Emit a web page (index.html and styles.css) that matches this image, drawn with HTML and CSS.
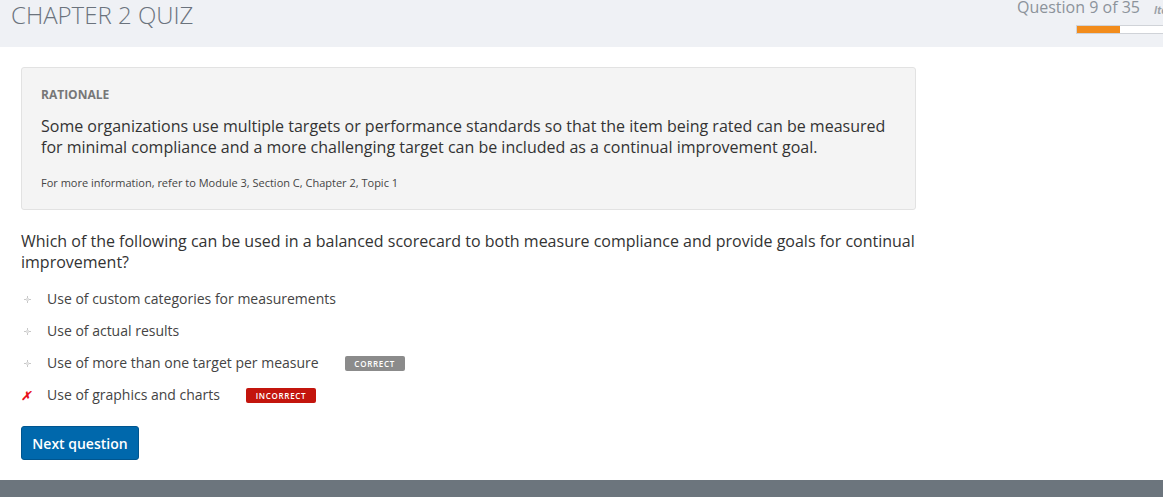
FILE: index.html
```html
<!DOCTYPE html>
<html>
<head>
<meta charset="utf-8">
<link rel="stylesheet" href="styles.css">
</head>
<body>
<header class="topbar">
  <h1 class="title">CHAPTER 2 QUIZ</h1>
  <div class="progress-area">
    <div class="progress-text"><span class="qcount">Question 9 of 35</span><span class="item">Item</span></div>
    <div class="progress"><div class="progress-fill" style="width:43px"></div></div>
  </div>
</header>
<main class="content">
  <section class="rationale">
    <div class="rationale-label">RATIONALE</div>
    <p class="rationale-text">Some organizations use multiple targets or performance standards so that the item being rated can be measured for minimal compliance and a more challenging target can be included as a continual improvement goal.</p>
    <p class="rationale-ref">For more information, refer to Module 3, Section C, Chapter 2, Topic 1</p>
  </section>
  <p class="question">Which of the following can be used in a balanced scorecard to both measure compliance and provide goals for continual improvement?</p>
  <ul class="options">
    <li class="option"><span class="marker"><svg width="7" height="7" viewBox="0 0 7 7"><rect x="3" y="0" width="1" height="2" fill="#c8c8c8"/><rect x="0" y="3" width="2" height="1" fill="#c8c8c8"/><rect x="5" y="3" width="2" height="1" fill="#c8c8c8"/><rect x="3" y="5" width="1" height="2" fill="#c8c8c8"/><rect x="2" y="2" width="3" height="3" fill="#e2e2e2"/></svg></span><span class="opt-text">Use of custom categories for measurements</span></li>
    <li class="option"><span class="marker"><svg width="7" height="7" viewBox="0 0 7 7"><rect x="3" y="0" width="1" height="2" fill="#c8c8c8"/><rect x="0" y="3" width="2" height="1" fill="#c8c8c8"/><rect x="5" y="3" width="2" height="1" fill="#c8c8c8"/><rect x="3" y="5" width="1" height="2" fill="#c8c8c8"/><rect x="2" y="2" width="3" height="3" fill="#e2e2e2"/></svg></span><span class="opt-text">Use of actual results</span></li>
    <li class="option"><span class="marker"><svg width="7" height="7" viewBox="0 0 7 7"><rect x="3" y="0" width="1" height="2" fill="#c8c8c8"/><rect x="0" y="3" width="2" height="1" fill="#c8c8c8"/><rect x="5" y="3" width="2" height="1" fill="#c8c8c8"/><rect x="3" y="5" width="1" height="2" fill="#c8c8c8"/><rect x="2" y="2" width="3" height="3" fill="#e2e2e2"/></svg></span><span class="opt-text">Use of more than one target per measure</span><span class="badge badge-correct">CORRECT</span></li>
    <li class="option"><span class="marker marker-x">✗</span><span class="opt-text">Use of graphics and charts</span><span class="badge badge-incorrect">INCORRECT</span></li>
  </ul>
  <button class="next-btn">Next question</button>
</main>
<footer class="footer"></footer>
</body>
</html>
```
FILE: styles.css
```css
html, body {
  margin: 0;
  padding: 0;
}
body {
  font-family: "Open Sans", "Liberation Sans", sans-serif;
  background: #fff;
  width: 1163px;
  height: 497px;
  overflow: hidden;
  display: flex;
  flex-direction: column;
}
.topbar {
  height: 47px;
  background: #eff1f5;
  display: flex;
  justify-content: space-between;
  flex-shrink: 0;
  overflow: hidden;
}
.title {
  margin: 0;
  padding-left: 11px;
  padding-top: 1px;
  font-weight: 300;
  font-size: 24px;
  line-height: 28px;
  color: #6b737d;
  letter-spacing: 0;
}
.progress-area {
  display: flex;
  flex-direction: column;
  align-items: flex-start;
  width: 146px;
  flex-shrink: 0;
}
.progress-text {
  display: flex;
  align-items: baseline;
  white-space: nowrap;
  height: 17px;
  line-height: 16px;
}
.qcount {
  font-size: 16px;
  color: #8c939b;
  font-weight: 400;
  position: relative;
  top: -1px;
}
.item {
  font-size: 10px;
  font-style: italic;
  font-weight: 700;
  color: #9aa0a7;
  margin-left: 14px;
}
.progress {
  margin-top: 8px;
  margin-left: 59px;
  width: 100px;
  height: 7px;
  background: #fff;
  border: 1px solid #d0d3d8;
  border-right: none;
  display: flex;
}
.progress-fill {
  background: #f28c1c;
  height: 100%;
}
.content {
  flex: 1;
  padding: 20px 21px 0 21px;
  display: flex;
  flex-direction: column;
  align-items: flex-start;
}
.rationale {
  width: 854px;
  background: #f4f4f4;
  border: 1px solid #e2e2e2;
  border-radius: 3px;
  padding: 19px 20px 19px 19px;
}
.rationale-label {
  font-size: 12px;
  font-weight: 700;
  color: #777;
  line-height: 16px;
}
.rationale-text {
  margin: 13px 0 0 0;
  font-size: 16px;
  line-height: 21px;
  color: #333;
}
.rationale-ref {
  margin: 17px 0 0 0;
  font-size: 11px;
  line-height: 15px;
  color: #444;
}
.question {
  margin: 21px 0 0 0;
  width: 900px;
  font-size: 16px;
  line-height: 21px;
  color: #333;
}
.options {
  list-style: none;
  margin: 16px 0 0 0;
  padding: 0;
  display: flex;
  flex-direction: column;
  gap: 12px;
}
.option {
  display: flex;
  align-items: center;
  height: 20px;
  font-size: 14px;
  color: #444;
}
.marker {
  width: 26px;
  display: flex;
  align-items: center;
  padding-left: 3px;
  box-sizing: border-box;
}
.marker svg {
  display: block;
}
.marker-x {
  color: #e8101a;
  font-size: 12px;
  font-style: italic;
  font-weight: 700;
  padding-left: 0;
}
.opt-text {
  line-height: 20px;
}
.badge {
  display: inline-block;
  font-size: 8px;
  font-weight: 600;
  letter-spacing: 0.7px;
  color: #fff;
  line-height: 15px;
  height: 15px;
  border-radius: 2px;
  text-align: center;
}
.badge-correct {
  background: #8b8b8b;
  width: 60px;
  margin-left: 26px;
}
.badge-incorrect {
  background: #c3150d;
  width: 70px;
  margin-left: 26px;
}
.next-btn {
  margin-top: 21px;
  font-family: "Open Sans", "Liberation Sans", sans-serif;
  font-size: 14px;
  font-weight: 600;
  color: #fff;
  background: #0068ac;
  border: 1px solid #00558f;
  border-radius: 3px;
  width: 118px;
  height: 34px;
  padding: 0;
}
.footer {
  height: 17px;
  background: #6c757d;
  flex-shrink: 0;
}
```
